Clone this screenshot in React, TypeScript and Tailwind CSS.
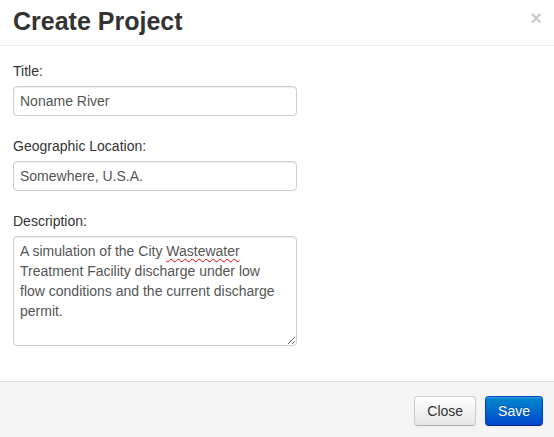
import React from "react";

function Field({label, value}: {label: string; value: string}) {
    return (
        <div className="mb-[20px]">
            <label className="block leading-[20px] mb-[5px] text-[#333]">{label}</label>
            <div
                className="w-[284px] h-[30px] px-[6px] border border-[#ccc] rounded-[4px] leading-[28px] text-[#555] shadow-[inset_0_1px_1px_rgba(0,0,0,0.075)]">
                {value}
            </div>
        </div>
    );
}

function App() {
    return (
        <div className="w-[554px] h-[437px] bg-white overflow-hidden text-[14px]"
             style={{fontFamily: '"Liberation Sans", Arial, sans-serif'}}>
            <div className="flex justify-between items-start pl-[13px] pr-[12px] pt-[6px] pb-[9px] border-b border-[#eee]">
                <h3 className="text-[25px] font-bold leading-[30px] text-[#333]">Create Project</h3>
                <span className="text-[20px] font-bold leading-[20px] mt-[2px] text-black opacity-20">×</span>
            </div>

            <div className="pl-[13px] pt-[15px] h-[335px]">
                <Field label="Title:" value="Noname River"/>
                <Field label="Geographic Location:" value="Somewhere, U.S.A."/>
                <div>
                    <label className="block leading-[20px] mb-[5px] text-[#333]">Description:</label>
                    <div
                        className="w-[284px] h-[110px] px-[6px] py-[4px] border border-[#ccc] rounded-[4px] leading-[20px] text-[#555] resize overflow-auto shadow-[inset_0_1px_1px_rgba(0,0,0,0.075)]">
                        <div className="whitespace-nowrap">A simulation of the City <span
                            className="underline decoration-wavy decoration-[#e00] decoration-1 underline-offset-2">Wastewater</span>
                        </div>
                        <div className="whitespace-nowrap">Treatment Facility discharge under low</div>
                        <div className="whitespace-nowrap">flow conditions and the current discharge</div>
                        <div className="whitespace-nowrap">permit.</div>
                    </div>
                </div>
            </div>

            <div className="flex justify-end gap-[9px] bg-[#f5f5f5] border-t border-[#ddd] pt-[14px] pr-[11px] h-[56px]">
                <button
                    className="h-[30px] px-[12px] rounded-[4px] border border-[#ccc] border-b-[#b3b3b3] text-[#333] leading-[20px] bg-gradient-to-b from-white to-[#e6e6e6] shadow-[inset_0_1px_0_rgba(255,255,255,0.2),0_1px_2px_rgba(0,0,0,0.05)]">
                    Close
                </button>
                <button
                    className="h-[30px] px-[12px] rounded-[4px] border border-[#0044cc] border-b-[#002a80] text-white leading-[20px] bg-gradient-to-b from-[#0088cc] to-[#0044cc] [text-shadow:0_-1px_0_rgba(0,0,0,0.25)] shadow-[inset_0_1px_0_rgba(255,255,255,0.2),0_1px_2px_rgba(0,0,0,0.05)]">
                    Save
                </button>
            </div>
        </div>
    );
}

export default App;
